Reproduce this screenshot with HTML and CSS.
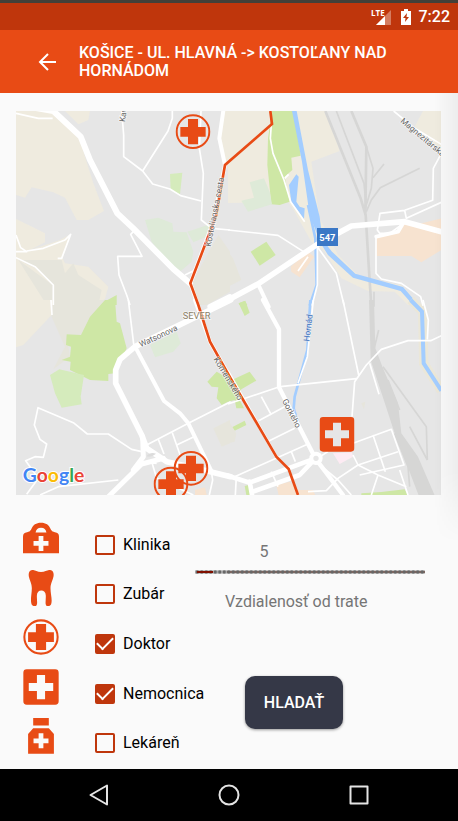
FILE: index.html
```html
<!DOCTYPE html>
<html lang="sk">
<head>
<meta charset="utf-8">
<meta name="viewport" content="width=device-width, initial-scale=1">
<title>Košice - Ul. Hlavná -&gt; Kostoľany nad Hornádom</title>
<link rel="stylesheet" href="styles.css">
</head>
<body>
<svg class="sprite" width="0" height="0" aria-hidden="true">
  <defs>
    <symbol id="doctor" viewBox="0 0 106 106">
      <circle cx="53" cy="53" r="49" fill="none" stroke="#e84b15" stroke-width="6"/>
      <path d="M38 15h30v24h23v29H68v23H38V68H15V39h23z" fill="#e84b15"/>
    </symbol>
    <symbol id="hospital" viewBox="0 0 106 106">
      <path fill="#e84b15" fill-rule="evenodd" d="M11 1h84a10 10 0 0 1 10 10v84a10 10 0 0 1-10 10H11A10 10 0 0 1 1 95V11A10 10 0 0 1 11 1zM41 18v23H17v24h24v24h24V65h24V41H65V18z"/>
    </symbol>
  </defs>
</svg>

<div class="status">
  <svg class="signal" width="21" height="18" viewBox="0 0 21 18" role="img" aria-label="LTE signál">
    <path d="M20 2v15H5z" fill="#fff" opacity=".35"/>
    <path d="M14 8v9H5z" fill="#fff"/>
    <path d="M0 0h12v7L9 10H0z" fill="#bf360c"/>
    <text x="0" y="8" class="lte">LTE</text>
  </svg>
  <svg width="10" height="16" viewBox="0 0 10 16" role="img" aria-label="Batéria sa nabíja">
    <path d="M3 0h4v2h3v14H0V2h3z" fill="#fff"/>
    <path d="M6 4 2 9h2.500L4 13l4-5H5.500z" fill="#bf360c"/>
  </svg>
  <time>7:22</time>
</div>

<header class="appbar">
  <button class="back" type="button" aria-label="Späť">
    <svg width="20" height="20" viewBox="0 0 20 20"><path d="M19 10H3M11 2 3 10l8 8" fill="none" stroke="#fff" stroke-width="2"/></svg>
  </button>
  <h1>KOŠICE - UL. HLAVNÁ -&gt; KOSTOĽANY NAD HORNÁDOM</h1>
</header>

<main>
  <svg class="map" viewBox="0 0 1275 1152" role="img" aria-label="Mapa trasy">
    <rect width="1275" height="1152" fill="#e6e6e6"/>

    <!-- Land cover, one group per map tile -->
    <g transform="translate(-18 -18)">
      <path class="sand" d="M18 18H125L210 95 225 155 250 235 282 318 235 345H200L165 278 130 262 65 247 45 278 18 270zM165 18H240L235 45 205 58zM18 342 60 362 105 385V412L60 435 150 405 182 388 158 460 165 475 235 485 295 545 285 582 260 600H18z"/>
      <path class="dust" d="M25 465H155L165 505 190 475 205 510 275 555 265 600H128V540L75 488zM25 465 110 600H128V540zM625 390 660 440V560L590 600H565L545 535 575 480z"/>
      <path class="sand" d="M640 18H666V165L645 180 628 100zM662 165V292H655V230z"/>
      <path class="sage" d="M405 345 445 338 487 355 490 380 530 382 550 440 545 470 512 498 470 470 425 410zM532 380 600 358 590 395 550 412z"/>
      <path class="lime" d="M480 207 517 203 510 268 482 255z"/>
      <path class="park" d="M265 600 320 570V600z"/>
    </g>
    <g transform="translate(636 -18)">
      <path class="sand" d="M0 18H295L335 138 250 170 275 340 330 450 400 520 520 540 575 600H540L500 560 420 558 340 520 290 440 250 410 200 320 180 290 0 294zM585 18H640V140L560 65zM0 170H10V290H0z"/>
      <path class="dust" d="M0 440 15 460 40 525 0 545z"/>
      <path class="park" d="M132 18H200L218 152 190 158 193 195 170 215 185 290 155 300 130 298 118 180 120 100zM68 440 115 410 143 450 95 482zM32 595 50 588 58 600H34z"/>
      <path class="sage" d="M65 232 108 220 125 260 132 298 60 320 40 287 78 278z"/>
      <path class="peach" d="M188 485 240 440 258 455 215 517 190 500zM445 395 510 380 525 355 560 360 640 340V435L580 472 550 453H445z"/>
    </g>
    <g transform="translate(-18 567)">
      <path class="sand" d="M18 0H130L125 45 40 135 18 142z"/>
      <path class="dust" d="M130 0H285L213 105 170 103 180 170 130 208 165 140 125 50zM610 385 660 360V430L635 440z"/>
      <path class="park" d="M285 0H315L320 65 330 70 350 145 315 220 295 222V243L240 240 180 210 182 185 155 180 180 170 183 140 168 135 170 103 213 105 240 50zM592 245 620 215 664 240V300L635 315 620 295 625 262 605 260z"/>
      <path class="lime" d="M120 225 148 208 222 225 212 290 215 313 155 323 135 280z"/>
      <path class="sage" d="M420 135 500 95 512 130 490 155 435 172z"/>
      <path class="peach" d="M555 570 585 562 590 585H555z"/>
    </g>
    <g transform="translate(636 567)">
      <path class="park" d="M32 10 52 2 65 38 50 48zM0 245 65 215 85 242 40 268 30 290 48 325 25 325 20 300 0 305zM12 382 50 362 55 375 20 392zM400 580 460 576 530 568 540 586H400zM50 558 62 555 68 585H55z"/>
      <path class="peach" d="M145 555 185 545 210 570H255L262 586H152z"/>
      <path class="dust" d="M0 360 25 400 20 425 0 430zM400 310 412 305 408 328z"/>
      <path d="M315 460 372 457 375 470 335 492z" fill="#fdebf3"/>
      <path d="M423 0H438L442 145 465 205 510 310 520 400 570 470 620 586H572L500 400 428 180z" fill="#d6d6d5"/>
      <path class="rail thin" d="M465 200 530 290 595 380 598 480M545 380 598 480M452 90 435 160M480 240 515 330M500 400 540 500 545 560"/>
    </g>

    <!-- Railways -->
    <g transform="translate(636 -18)">
      <path class="rail" d="M292 18 398 280 413 330 422 480 430 605M370 18 415 125 412 330"/>
      <path class="rail thin" d="M325 18 408 235 414 300M415 125 435 190 430 250 412 310M435 218 468 177M415 320 430 285 457 248 575 190M438 560V605"/>
    </g>

    <!-- Rivers -->
    <g transform="translate(636 -18)">
      <path class="water" d="M192 18H206L240 195 275 335 280 375 300 425 312 440 382 506 525 546 572 600H555L518 558 375 518 300 450 278 415 245 330 222 170z"/>
      <path class="water" d="M205 208 212 215 205 290 215 305 230 310 228 342 190 290 183 240z"/>
      <path class="stream" d="M240 300 262 400 266 540 245 602"/>
    </g>
    <g transform="translate(636 567)">
      <path d="M548 0 584 35 587 190 640 272" fill="none" stroke="#ebe7d8" stroke-width="28"/>
      <path class="stream wide" d="M548 0 582 35 587 190 640 272"/>
      <path class="stream" d="M247 0 238 150 200 290 197 325 215 385"/>
    </g>

    <!-- Minor streets -->
    <g class="street" transform="translate(-18 -18)">
      <path d="M335 18 341 90V155L398 198 428 237 480 252 512 272 573 288M487 18V40L474 78 398 198M573 18 568 130 580 205 574 345 605 370 660 375M18 25 85 40H128M18 390 32 428 50 440 18 440M50 438 100 430 165 405 182 388 155 460H143M18 458 75 485 130 540V600M370 380 362 388 396 454H323L327 510 350 570 360 600M525 510 555 495"/>
    </g>
    <g class="street" transform="translate(636 -18)">
      <path d="M130 57 127 100 135 145 168 225 188 290 230 350M170 220 182 208M0 375 150 391 230 442M268 425 325 505 348 600M268 420V540L252 602M497 18 560 70 640 118M640 145 616 190 614 286 530 316 456 325 448 375 455 385H485L520 360M640 292 535 340 530 316M444 395V505L460 522 520 535 578 575 585 602M210 498 240 455"/>
    </g>
    <g class="street" transform="translate(-18 567)">
      <path d="M355 0 372 140M123 0 126 45M50 583 85 535 47 482 75 470 100 472 110 432 90 418 73 375 84 323 190 368 232 402H295L365 448 395 455M90 585 145 560 325 540M410 435 535 370 662 305M445 418 462 462M487 398 512 470M500 435 552 410M605 520 608 540 598 585M425 485 440 535 550 585M395 485 440 490"/>
    </g>
    <g class="street" transform="translate(636 567)">
      <path d="M345 0 392 225M585 0 601 60 598 118M640 107 608 122H540L460 148 415 195 380 245 372 350M157 260 385 236M256 0 238 170 210 250M0 312 150 262M100 290 130 345M92 362 170 320M118 425 200 385M20 530 240 432M190 455 202 485M375 430 490 388 528 495 395 525M435 405 472 515M375 465 390 495 450 525 535 560M390 495 330 535 295 572 240 575M270 490 330 540 370 585M510 455 390 495M450 525 430 585M515 510 540 585M130 515 150 560M25 530 22 585M260 480 300 455"/>
      <path d="M425 190 453 283"/>
    </g>

    <!-- Arterial roads -->
    <g class="road" transform="translate(-18 -18)">
      <path stroke-width="18" d="M25 0 130 18 212 95 240 165 322 325 370 370 490 492 540 535"/>
      <path stroke-width="12" d="M641 10 628 100 645 180 610 350 541 535 565 605"/>
      <path stroke-width="16" d="M660 575 600 605"/>
    </g>
    <g class="road" transform="translate(636 -18)">
      <path stroke-width="17" d="M0 585 90 537 265 420 370 363 530 350 640 380"/>
      <path stroke-width="12" d="M90 537 122 605M445 395 510 380 525 355"/>
    </g>
    <g class="road" transform="translate(-18 567)">
      <path stroke-width="17" d="M662 0 375 140 330 178 317 210V250L395 405 410 445 470 485 540 500 662 530"/>
      <path stroke-width="15" d="M295 590 395 492 460 475M398 410 400 470 370 510"/>
      <path stroke-width="12" d="M378 145 462 303 510 340 535 370 605 515M555 0 600 125 662 235"/>
    </g>
    <g class="road" transform="translate(636 567)">
      <path stroke-width="13" d="M105 0 153 88V262L262 475 345 585"/>
      <path stroke-width="14" d="M0 527 65 548 262 475M65 545 72 585M75 575 215 525 262 475"/>
      <path stroke-width="9" d="M0 215 145 470"/>
      <circle cx="264" cy="475" r="14" stroke-width="12" fill="#e6e6e6"/>
    </g>
    <path d="M392 1036q10-14 28-8-14 12-28 8z" fill="#dcdcdc"/>

    <polyline class="route" points="763,0 768,39 627,162 600,315 523,517 547,582 582,692 642,799 781,1037 818,1074 846,1152"/>

    <!-- Labels -->
    <g class="label">
      <text transform="translate(327 34) rotate(-82)">Kav</text>
      <text transform="translate(584 408) rotate(-79)">Kostolianska cesta</text>
      <text transform="translate(374 709) rotate(-25)">Watsonova</text>
      <text transform="translate(592 745) rotate(59)">Komenského</text>
      <text transform="translate(798 869) rotate(63)">Gorkého</text>
      <text transform="translate(1152 32) rotate(40)">Magnezitárska</text>
      <text class="river" transform="translate(880 692) rotate(-83)">Hornád</text>
      <text class="district" x="500" y="624">SEVER</text>
    </g>
    <rect x="903" y="351" width="63" height="54" fill="#3b78c6"/>
    <text class="shield" x="934" y="389">547</text>

    <use href="#doctor" x="478" y="9" width="106" height="106"/>
    <use href="#doctor" x="412" y="1066" width="106" height="106"/>
    <use href="#doctor" x="472" y="1019" width="106" height="106"/>
    <use href="#hospital" x="910" y="917" width="106" height="106"/>

    <text class="google" x="20" y="1112"><tspan fill="#4285f4">G</tspan><tspan fill="#ea4335">o</tspan><tspan fill="#fbbc05">o</tspan><tspan fill="#4285f4">g</tspan><tspan fill="#34a853">l</tspan><tspan fill="#ea4335">e</tspan></text>
  </svg>

  <form class="panel">
    <div class="places">
      <div class="place">
        <svg viewBox="0 0 106 106" aria-hidden="true"><path fill="#e84b15" d="M0 98V49q0-12 12-13 10-2 12-8C29 14 39 8 53 8s24 6 29 20q2 6 12 8 12 1 12 13v49z"/><path fill="#fafafa" d="M37 37q2-14 16-14t16 14zM46 47h14v15h15v14H60v15H46V76H31V62h15z"/></svg>
        <input type="checkbox" id="klinika"><label for="klinika">Klinika</label>
      </div>
      <div class="place">
        <svg viewBox="0 0 106 106" aria-hidden="true"><path fill="#e84b15" d="M27 0c8-1 13 6 26 6S72-1 80 0c10 1 12 12 9 22-3 12-8 18-8 32 0 17 6 34 2 46-2 6-9 8-14 5-5-4-1-18-2-31 0-9-6-14-13-14s-13 5-13 14c-1 13 3 27-2 31-5 3-12 1-14-5-4-12 1-29 1-46 0-14-5-20-8-32C15 12 17 1 27 0z"/></svg>
        <input type="checkbox" id="zubar"><label for="zubar">Zubár</label>
      </div>
      <div class="place">
        <svg aria-hidden="true"><use href="#doctor"/></svg>
        <input type="checkbox" id="doktor" checked><label for="doktor">Doktor</label>
      </div>
      <div class="place">
        <svg aria-hidden="true"><use href="#hospital"/></svg>
        <input type="checkbox" id="nemocnica" checked><label for="nemocnica">Nemocnica</label>
      </div>
      <div class="place">
        <svg viewBox="0 0 106 106" aria-hidden="true"><path fill="#e84b15" d="M30 0h46v22H30zM30 30h46l15 17v58H15V47z"/><path fill="#fafafa" d="M46 45h14v15h15v14H60v15H46V74H31V60h15z"/></svg>
        <input type="checkbox" id="lekaren"><label for="lekaren">Lekáreň</label>
      </div>
    </div>
    <div class="search">
      <output for="vzdialenost">5</output>
      <input type="range" id="vzdialenost" min="0" max="50" value="5">
      <label for="vzdialenost">Vzdialenosť od trate</label>
      <button type="button">HLADAŤ</button>
    </div>
  </form>
</main>

<nav class="navbar">
  <button type="button" aria-label="Späť"><svg width="22" height="22" viewBox="0 0 22 22"><path d="M19 1.500v19L2.500 11z"/></svg></button>
  <button type="button" aria-label="Domov"><svg width="22" height="22" viewBox="0 0 22 22"><circle cx="11" cy="11" r="9.500"/></svg></button>
  <button type="button" aria-label="Prehľad"><svg width="22" height="22" viewBox="0 0 22 22"><path d="M2.500 2.500h17v17h-17z"/></svg></button>
</nav>
</body>
</html>
```

FILE: styles.css
```css
* { box-sizing: border-box; }

body {
  margin: 0;
  min-height: 100vh;
  display: flex;
  flex-direction: column;
  background: #fafafa;
  color: #000;
  font: 16px/20px Roboto, sans-serif;
}

button {
  border: 0;
  padding: 0;
  background: none;
  font: inherit;
}

svg { display: block; }
.sprite { position: absolute; }

.status {
  display: flex;
  align-items: center;
  justify-content: flex-end;
  height: 30px;
  padding: 0 8px 0 0;
  border-top: 3px solid #434039;
  background: #bf360c;
  color: #fff;
  font-weight: 500;
}
.signal { margin-right: 9px; }
.status time { margin-left: 8px; }
.lte {
  fill: #fff;
  font: 700 8px "Open Sans", sans-serif;
}

.appbar {
  display: flex;
  align-items: center;
  min-height: 63px;
  padding: 0 64px 0 37px;
  background: #e84b15;
  color: #fff;
}
.back { margin-right: 22px; }
.appbar h1 {
  margin: 0;
  font-size: 16px;
  font-weight: 500;
  line-height: 18px;
}

main {
  position: relative;
  flex: 1;
  display: flex;
  flex-direction: column;
}
/* Shade cast on the right edge of the screen */
main::after {
  content: "";
  position: absolute;
  top: 0;
  right: 0;
  width: 24px;
  height: 450px;
  background: linear-gradient(to right, transparent, rgba(0, 0, 0, .05));
  mask-image: linear-gradient(#000 84%, transparent);
  pointer-events: none;
}

.map {
  margin: 18px 17px 0 16px;
}
.sand { fill: #efebdf; }
.dust { fill: #e6e5dc; }
.park { fill: #cee7a5; }
.lime { fill: #d5ebbc; }
.sage { fill: #deead8; }
.peach { fill: #f7e3d0; }
.water { fill: #a3cdff; }
.stream { fill: none; stroke: #a3cdff; stroke-width: 8px; }
.wide { stroke-width: 12px; }
.rail { fill: none; stroke: #d6d6d5; stroke-width: 8px; }
.thin { stroke-width: 5px; }
.street { fill: none; stroke: #fff; stroke-width: 5px; stroke-linejoin: round; }
.road { fill: none; stroke: #fff; stroke-linejoin: round; stroke-linecap: round; }
.route { fill: none; stroke: #e84b15; stroke-width: 8px; }
.label {
  fill: #666;
  stroke: #fff;
  stroke-width: 4px;
  stroke-opacity: .7;
  paint-order: stroke;
  font-size: 25px;
}
.river { fill: #3a70c0; stroke: #e6e6e6; }
.district { fill: #8c7f66; font-size: 28px; }
.shield { fill: #fff; font-size: 28px; font-weight: 700; text-anchor: middle; }
.google {
  font: 700 58px Lato, sans-serif;
  stroke: #fff;
  stroke-width: 6px;
  paint-order: stroke;
}

.panel {
  flex: 1;
  display: grid;
  grid-template-columns: 172px minmax(0, 1fr);
  padding: 25px 33px 1px 23px;
}
.places {
  display: grid;
  grid-auto-rows: 1fr;
}
.place {
  display: flex;
  align-items: center;
  white-space: nowrap;
}
.place svg {
  align-self: flex-start;
  flex: none;
  width: 36px;
  height: 36px;
  margin-right: 36px;
}
.place input {
  appearance: none;
  flex: none;
  display: grid;
  place-items: center;
  width: 20px;
  height: 20px;
  margin: 0 8px 0 0;
  border: 2px solid #bf360c;
  border-radius: 2px;
}
.place input:checked { background: #bf360c; }
.place input:checked::after {
  content: "";
  width: 14px;
  height: 7px;
  margin-bottom: 4px;
  border: solid #fff;
  border-width: 0 0 2px 2px;
  transform: rotate(-45deg);
}

.search {
  display: flex;
  flex-direction: column;
  align-items: flex-start;
  padding-top: 22px;
  color: #757575;
}
.search output {
  width: 60%;
  text-align: center;
}
.search input {
  appearance: none;
  width: 100%;
  height: 4px;
  margin: 8px 0 18px;
  background:
    linear-gradient(to right, transparent 1%, #801000 1% 8%, transparent 8%) 0 1px / 100% 2px no-repeat,
    radial-gradient(circle, #666 1px, transparent 3px) 0 0 / calc(100% / 51) 4px,
    linear-gradient(to right, transparent 14%, #9c6a5c 14%) 0 1px / 100% 2px no-repeat;
}
.search input::-webkit-slider-thumb {
  appearance: none;
  width: 12px;
  height: 12px;
  background: transparent;
}
.search label {
  width: 88%;
  text-align: center;
}
.search button {
  align-self: flex-start;
  margin: 64px 0 0 50px;
  width: 98px;
  height: 53px;
  border-radius: 10px;
  background: #353847;
  color: #fff;
  font-weight: 500;
  box-shadow: 0 1px 3px rgba(0, 0, 0, .4);
}

.navbar {
  display: flex;
  height: 52px;
  padding: 0 34px;
  background: #000;
}
.navbar button {
  flex: 1;
  display: grid;
  place-items: center;
}
.navbar svg {
  fill: none;
  stroke: #e4e4e4;
  stroke-width: 2px;
  stroke-linejoin: round;
}
```
